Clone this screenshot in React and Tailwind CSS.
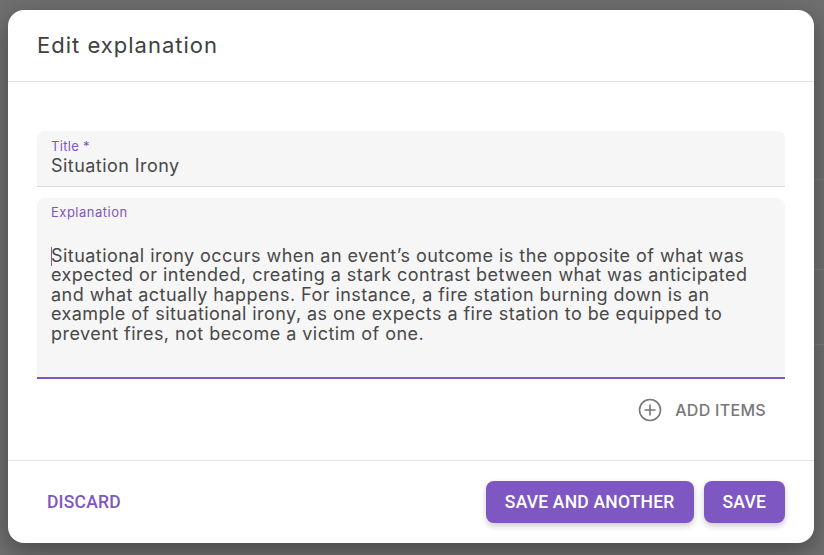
export default function App() {
  return (
    <div className="w-[824px] h-[555px] bg-[#6f6f6f] overflow-hidden relative" style={{ fontFamily: "Inter, 'Noto Sans', sans-serif" }}>
      <div className="absolute left-[814px] top-0 w-[10px] h-full flex flex-col">
        <div className="h-[180px] border-b border-[#7a7a7a]"></div>
        <div className="h-[90px] border-b border-[#7a7a7a]"></div>
        <div className="h-[75px] border-b border-[#7a7a7a]"></div>
      </div>
      <div className="absolute left-[8px] top-[10px] w-[806px] h-[533px] bg-white rounded-[16px] shadow-[0_8px_24px_rgba(0,0,0,0.35)] flex flex-col">
        <div className="h-[72px] flex items-center px-[29px] border-b border-[#e3e3e3]">
          <h2 className="text-[22px] font-normal text-[#404040] tracking-[1px]">Edit explanation</h2>
        </div>
        <div className="flex-1 px-[29px] pt-[49px] flex flex-col">
          <div className="h-[56px] bg-[#f6f6f6] rounded-t-[8px] border-b border-[#d9d9d9] px-[14px] pt-[7px]">
            <div className="text-[13px] leading-[16px] text-[#7e57c2] tracking-[0.3px]">Title *</div>
            <div className="text-[18px] leading-[24px] text-[#484848] tracking-[0.45px]">Situation Irony</div>
          </div>
          <div className="mt-[11px] h-[181px] bg-[#f6f6f6] rounded-t-[8px] border-b-2 border-[#7e57c2] px-[14px] pt-[6px]">
            <div className="text-[13px] leading-[16px] text-[#7e57c2] tracking-[0.5px]">Explanation</div>
            <div className="relative mt-[26px] text-[18px] leading-[19.4px] text-[#484848] tracking-[0.45px] pr-[20px]">
              <span className="absolute left-0 top-[1px] w-px h-[19px] bg-[#7e57c2]"></span>
              Situational irony occurs when an event’s outcome is the opposite of what was expected or intended, creating a stark contrast between what was anticipated and what actually happens. For instance, a fire station burning down is an example of situational irony, as one expects a fire station to be equipped to prevent fires, not become a victim of one.
            </div>
          </div>
          <div className="flex justify-end pr-[19px] mt-[19px]">
            <div className="flex items-center gap-[13px] text-[#777]">
              <svg width="24" height="24" viewBox="0 0 24 24" fill="none" stroke="#777" strokeWidth="1.6">
                <circle cx="12" cy="12" r="10.5" />
                <path d="M12 6.5v11M6.5 12h11" />
              </svg>
              <span className="text-[16px] font-medium tracking-[0.3px]">ADD ITEMS</span>
            </div>
          </div>
        </div>
        <div className="h-[83px] border-t border-[#e3e3e3] flex items-center justify-between px-[29px]">
          <button className="text-[17.5px] font-medium text-[#7e57c2] px-[10px] h-[42px] tracking-[0.2px]" style={{ fontFamily: "Roboto, sans-serif" }}>DISCARD</button>
          <div className="flex gap-[10px]">
            <button className="h-[42px] px-[19px] rounded-[8px] bg-[#7e57c2] text-white text-[17.5px] font-medium tracking-[0.2px] shadow-[0_3px_6px_rgba(0,0,0,0.2)]" style={{ fontFamily: "Roboto, sans-serif" }}>SAVE AND ANOTHER</button>
            <button className="h-[42px] px-[19px] rounded-[8px] bg-[#7e57c2] text-white text-[17.5px] font-medium tracking-[0.2px] shadow-[0_3px_6px_rgba(0,0,0,0.2)]" style={{ fontFamily: "Roboto, sans-serif" }}>SAVE</button>
          </div>
        </div>
      </div>
    </div>
  );
}
